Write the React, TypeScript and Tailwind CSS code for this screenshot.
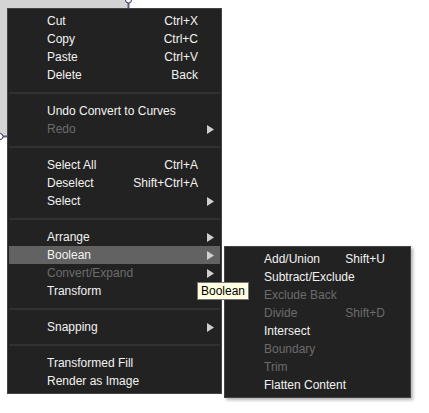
import React from "react";

type Item =
  | { sep: true }
  | { label: string; shortcut?: string; sub?: boolean; disabled?: boolean; active?: boolean };

const mainItems: Item[] = [
  { label: "Cut", shortcut: "Ctrl+X" },
  { label: "Copy", shortcut: "Ctrl+C" },
  { label: "Paste", shortcut: "Ctrl+V" },
  { label: "Delete", shortcut: "Back" },
  { sep: true },
  { label: "Undo Convert to Curves" },
  { label: "Redo", sub: true, disabled: true },
  { sep: true },
  { label: "Select All", shortcut: "Ctrl+A" },
  { label: "Deselect", shortcut: "Shift+Ctrl+A" },
  { label: "Select", sub: true },
  { sep: true },
  { label: "Arrange", sub: true },
  { label: "Boolean", sub: true, active: true },
  { label: "Convert/Expand", sub: true, disabled: true },
  { label: "Transform" },
  { sep: true },
  { label: "Snapping", sub: true },
  { sep: true },
  { label: "Transformed Fill" },
  { label: "Render as Image" },
];

const booleanItems: Item[] = [
  { label: "Add/Union", shortcut: "Shift+U" },
  { label: "Subtract/Exclude" },
  { label: "Exclude Back", disabled: true },
  { label: "Divide", shortcut: "Shift+D", disabled: true },
  { label: "Intersect" },
  { label: "Boundary", disabled: true },
  { label: "Trim", disabled: true },
  { label: "Flatten Content" },
];

const Arrow = () => (
  <svg width="7" height="9" viewBox="0 0 7 9" className="absolute right-[6px] top-[5px]">
    <polygon points="0,0 7,4.5 0,9" fill="#cfcfcf" />
  </svg>
);

const MenuList = ({ items, pl, pr }: { items: Item[]; pl: string; pr: string }) => (
  <div className="flex flex-col px-px py-[3px]">
    {items.map((it, i) =>
      "sep" in it ? (
        <div key={i} className="h-[18px] flex items-center">
          <div className="h-[2px] w-full bg-[#313131]" />
        </div>
      ) : (
        <div
          key={i}
          className={`relative flex items-center h-[18px] ${pl} ${pr} ${
            it.active ? "bg-[#626262]" : ""
          } ${it.disabled ? "text-[#6c6c6c]" : "text-[#f2f2f2]"}`}
        >
          <span className="flex-1 whitespace-nowrap">{it.label}</span>
          {it.shortcut && <span className="whitespace-nowrap">{it.shortcut}</span>}
          {it.sub && <Arrow />}
        </div>
      )
    )}
  </div>
);

export default function App() {
  return (
    <div
      className="relative w-[429px] h-[413px] bg-white overflow-hidden text-[12px] leading-none"
      style={{ fontFamily: '"Liberation Sans", Arial, sans-serif' }}
    >
      {/* canvas behind the menu */}
      <svg className="absolute left-0 top-0" width="429" height="413">
        <rect x="0" y="0" width="128" height="136" fill="#d4d4d4" />
        <line x1="128.5" y1="2" x2="128.5" y2="9" stroke="#5b5b8f" strokeWidth="2" />
        <circle cx="128.5" cy="0" r="3" fill="#fff" stroke="#33334a" strokeWidth="1" />
        <line x1="2" y1="136.5" x2="9" y2="136.5" stroke="#5b5b8f" strokeWidth="2" />
        <circle cx="0" cy="136.5" r="3" fill="#fff" stroke="#33334a" strokeWidth="1" />
      </svg>

      {/* main context menu */}
      <div className="absolute left-[7px] top-[8px] w-[215px] bg-[#222222] border border-[#444444]">
        <MenuList items={mainItems} pl="pl-[38px]" pr="pr-[22px]" />
      </div>

      {/* Boolean submenu */}
      <div className="absolute left-[224px] top-[246px] w-[187px] bg-[#222222] border border-[#444444] shadow-[2px_2px_3px_rgba(0,0,0,0.3)]">
        <MenuList items={booleanItems} pl="pl-[38px]" pr="pr-[24px]" />
      </div>

      {/* tooltip */}
      <div className="absolute left-[197px] top-[282px] h-[18px] px-[3px] flex items-center bg-[#ffffe1] border border-[#767676] text-black">
        Boolean
      </div>
    </div>
  );
}
